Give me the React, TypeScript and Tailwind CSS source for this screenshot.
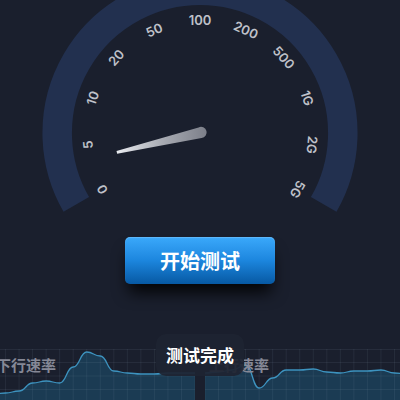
import React from "react";

interface PanelProps {
  title: string;
  id: string;
  points: number[];
}

const TICKS: string[] = ["0", "5", "10", "20", "50", "100", "200", "500", "1G", "2G", "5G"];

// sample heights, measured down from the top of the chart
const DOWNLOAD: number[] = [45, 44, 42, 34, 32, 34, 18, 3, 7, 22, 24, 25, 25, 24, 24, 24];
const UPLOAD: number[] = [24, 23, 21, 16, 39, 29, 21, 21, 20, 23, 24, 22, 22, 21, 24, 25];

const CHART_W = 203;
const CHART_H = 68;
const STEP = CHART_W / 15;

const getLine = (points: number[]): string =>
  points.reduce((path, y, i) => {
    if (i === 0) return `M0 ${y}`;
    const mid = (i - 0.5) * STEP;
    return `${path} C${mid} ${points[i - 1]} ${mid} ${y} ${i * STEP} ${y}`;
  }, "");

const Gauge: React.FC = () => {
  return (
    <svg
      viewBox="-160 -160 320 244"
      className="w-[320px] h-[244px] -mt-[27px] shrink-0"
      role="img"
      aria-label="Mbps"
    >
      <defs>
        <linearGradient id="needle" x1="0" y1="0" x2="1" y2="0">
          <stop offset="0" stopColor="#e9ebf0" />
          <stop offset="0.5" stopColor="#a9acb4" />
          <stop offset="1" stopColor="#7c7f89" />
        </linearGradient>
      </defs>
      <path
        d="M-123.7 71.4 A142.8 142.8 0 1 1 123.7 71.4"
        fill="none"
        stroke="#22304f"
        strokeWidth="29.5"
      />
      {TICKS.map((tick, index) => (
        <text
          key={tick}
          transform={`rotate(${index * 24 - 120})`}
          y="-108"
          textAnchor="middle"
          className="fill-[#bfc1c9] text-[13px] font-semibold font-[Inter,sans-serif]"
        >
          {tick}
        </text>
      ))}
      <path
        d="M-83.5 18 L-82.8 20.7 L1.6 5 A5.6 5.6 0 1 0 -1.4 -5.6 Z"
        fill="url(#needle)"
      />
    </svg>
  );
};

const SpeedPanel: React.FC<PanelProps> = ({ title, id, points }) => {
  const line = getLine(points);
  return (
    <section className="relative flex-1 min-w-0" aria-labelledby={id}>
      <svg
        viewBox={`0 0 ${CHART_W} ${CHART_H}`}
        preserveAspectRatio="none"
        className="block w-full h-[68px]"
      >
        <path d={`${line} V${CHART_H} H0 Z`} fill="#1b3b53" />
        <g stroke="#8fa3bd" strokeOpacity="0.1" strokeWidth="1">
          {points.map((_, i) => (
            <line key={i} x1={i * STEP} x2={i * STEP} y1="0" y2={CHART_H} />
          ))}
          {[0.5, 13.5, 27, 40.5, 54].map((y) => (
            <line key={y} x1="0" x2={CHART_W} y1={y} y2={y} />
          ))}
        </g>
        <path d={line} fill="none" stroke="#3d93bf" strokeWidth="1.3" />
      </svg>
      <h2
        id={id}
        className="absolute top-1 left-1 text-[15px] leading-6 font-bold text-[#858896]"
      >
        {title}
      </h2>
    </section>
  );
};

const App: React.FC = () => {
  return (
    <main className="relative h-screen overflow-hidden bg-[#1a1f2d] flex flex-col items-center font-['Noto_Sans_CJK_SC',sans-serif]">
      <Gauge />
      <button
        type="button"
        className="mt-5 w-[150px] h-[47px] shrink-0 rounded-[5px] bg-linear-to-b from-[#3aa9fb] via-[#1c86de] to-[#0759a3] text-xl leading-none font-bold text-white shadow-[0_12px_16px_-4px_rgba(0,0,0,0.9),inset_0_1px_1px_rgba(255,255,255,0.2)] cursor-pointer"
      >
        开始测试
      </button>
      <div className="mt-[65px] self-stretch -mx-2 flex gap-[10px]">
        <SpeedPanel id="download" title="下行速率" points={DOWNLOAD} />
        <SpeedPanel id="upload" title="上行速率" points={UPLOAD} />
      </div>
      <div
        role="status"
        className="absolute bottom-6 left-1/2 -translate-x-1/2 rounded-[10px] bg-[#1e2331]/93 px-[10px] py-[9px] text-[17px] leading-6 font-bold text-white whitespace-nowrap"
      >
        测试完成
      </div>
    </main>
  );
};

export default App;
